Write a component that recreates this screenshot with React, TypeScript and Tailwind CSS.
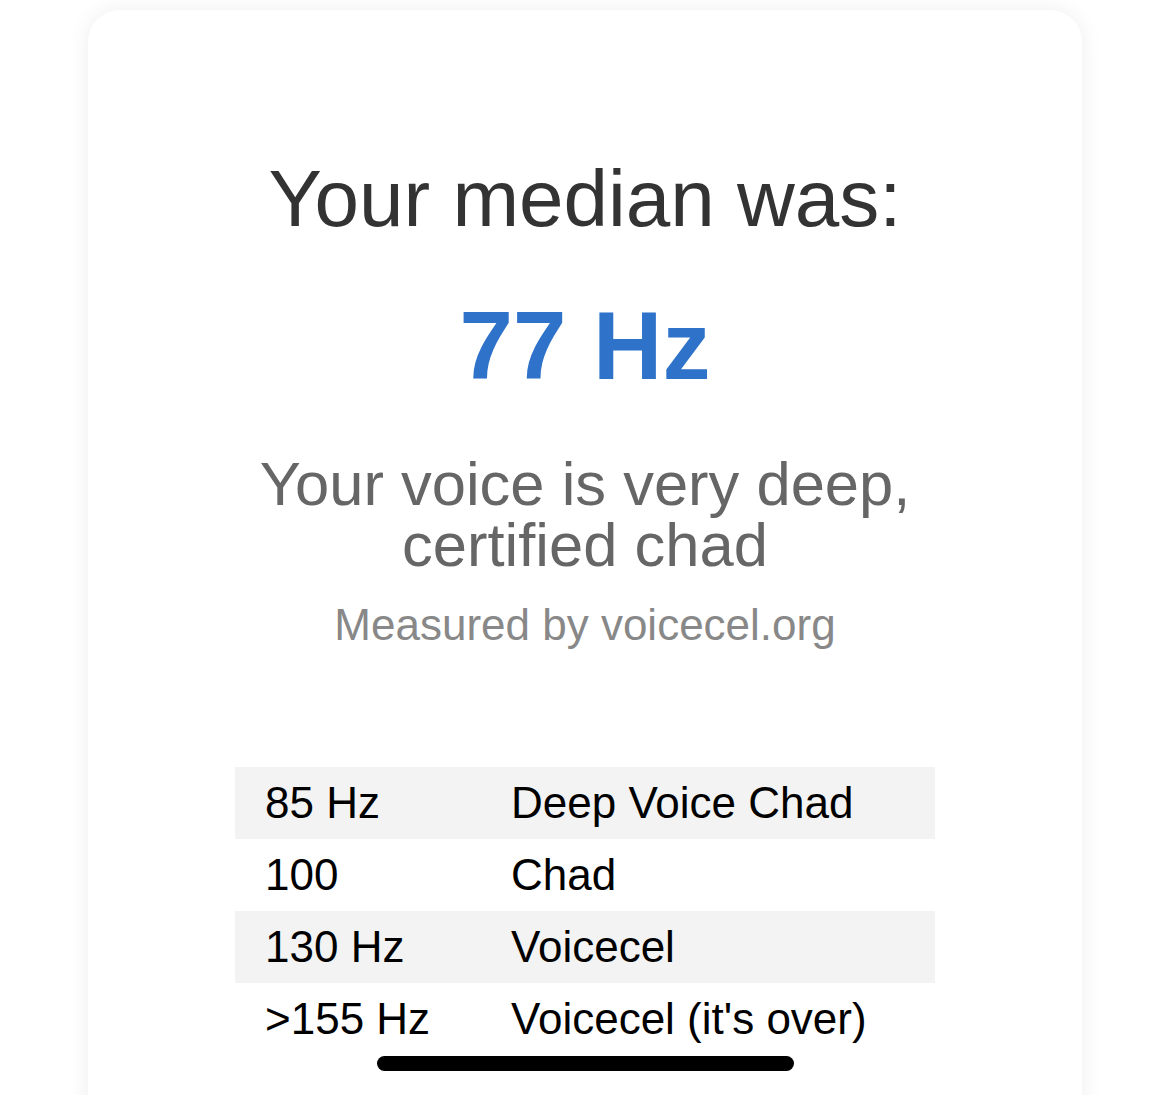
import React from "react";

type Band = { hz: string; label: string };

const bands: Band[] = [
  { hz: "85 Hz", label: "Deep Voice Chad" },
  { hz: "100", label: "Chad" },
  { hz: "130 Hz", label: "Voicecel" },
  { hz: ">155 Hz", label: "Voicecel (it's over)" },
];

const App: React.FC = () => {
  return (
    <div
      className="relative h-[1095px] overflow-hidden bg-white"
      style={{ fontFamily: '"Liberation Sans", Arial, sans-serif' }}
    >
      <div className="mx-[88px] mt-[10px] rounded-[32px] bg-white pt-[149px] pb-[120px] shadow-[0_0_22px_rgba(0,0,0,0.07)]">
        <div className="flex flex-col items-center text-center">
          <h1 className="text-[80px] leading-[80px] font-normal text-[#333333]">
            Your median was:
          </h1>
          <div className="mt-[59px] text-[96px] leading-[96px] font-bold text-[#2e72c9]">
            77 Hz
          </div>
          <p className="mt-[59px] text-[61.5px] leading-[61px] text-[#666666]">
            Your voice is very deep,
            <br />
            certified chad
          </p>
          <p className="mt-[28px] text-[44px] leading-[44px] text-[#888888]">
            Measured by voicecel.org
          </p>
        </div>

        {/* pitch reference table */}
        <div className="mx-auto mt-[120px] w-[700px] text-[44px] leading-[44px] text-black">
          {bands.map((b, i) => (
            <div
              key={b.hz}
              className={
                "flex h-[72px] items-center " +
                (i % 2 === 0 ? "bg-[#f3f3f3]" : "bg-white")
              }
            >
              <div className="w-[276px] pl-[30px]">{b.hz}</div>
              <div>{b.label}</div>
            </div>
          ))}
        </div>
      </div>

      {/* home indicator */}
      <div className="absolute bottom-[24px] left-[377px] h-[15px] w-[417px] rounded-full bg-black" />
    </div>
  );
};

export default App;
